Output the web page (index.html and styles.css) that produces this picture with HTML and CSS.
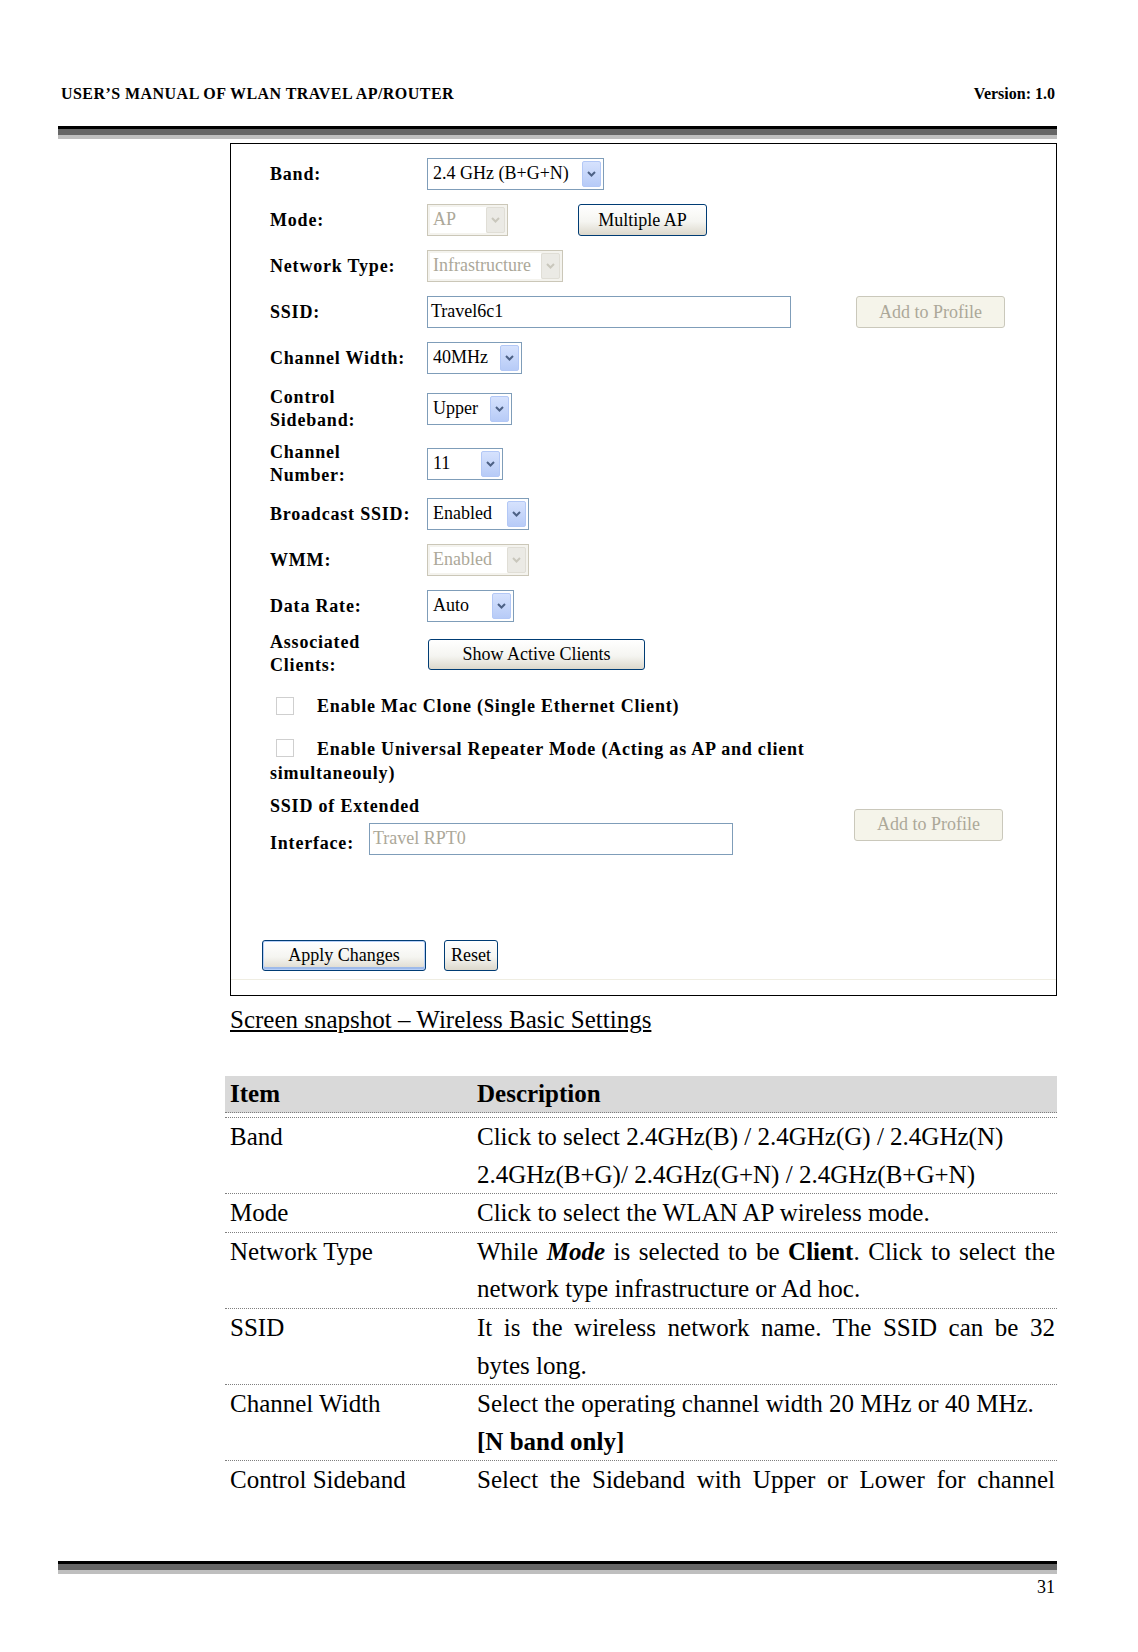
FILE: index.html
```
<!DOCTYPE html>
<html lang="en">
  <head>
    <meta charset="utf-8">
    <title>User's Manual - Wireless Basic Settings</title>
    <link rel="stylesheet" href="styles.css">
  </head>
  <body>
    <div class="sheet">
      <header class="runhead">
        <span class="doc-title">USER’S MANUAL OF WLAN TRAVEL AP/ROUTER</span>
        <span>Version: 1.0</span>
      </header>
      <div class="rule"></div>

      <div class="shot">
        <div class="form">
          <div class="row">
            <div class="lbl">Band:</div>
            <div class="sel sel-band"><span class="val">2.4 GHz (B+G+N)</span><span class="arr"><svg viewBox="0 0 9 6" width="9" height="6"><path d="M1 1 L4.5 4.5 L8 1" /></svg></span></div>
          </div>
          <div class="row">
            <div class="lbl">Mode:</div>
            <div class="sel sel-mode off"><span class="val">AP</span><span class="arr"><svg viewBox="0 0 9 6" width="9" height="6"><path d="M1 1 L4.5 4.5 L8 1" /></svg></span></div>
            <button class="btn btn-multi">Multiple AP</button>
          </div>
          <div class="row">
            <div class="lbl">Network Type:</div>
            <div class="sel sel-type off"><span class="val">Infrastructure</span><span class="arr"><svg viewBox="0 0 9 6" width="9" height="6"><path d="M1 1 L4.5 4.5 L8 1" /></svg></span></div>
          </div>
          <div class="row">
            <div class="lbl">SSID:</div>
            <div class="field field-ssid">Travel6c1</div>
            <button class="btn btn-add" disabled>Add to Profile</button>
          </div>
          <div class="row">
            <div class="lbl">Channel Width:</div>
            <div class="sel sel-width"><span class="val">40MHz</span><span class="arr"><svg viewBox="0 0 9 6" width="9" height="6"><path d="M1 1 L4.5 4.5 L8 1" /></svg></span></div>
          </div>
          <div class="row two">
            <div class="lbl">Control<br>Sideband:</div>
            <div class="sel sel-side"><span class="val">Upper</span><span class="arr"><svg viewBox="0 0 9 6" width="9" height="6"><path d="M1 1 L4.5 4.5 L8 1" /></svg></span></div>
          </div>
          <div class="row two">
            <div class="lbl">Channel<br>Number:</div>
            <div class="sel sel-chan"><span class="val">11</span><span class="arr"><svg viewBox="0 0 9 6" width="9" height="6"><path d="M1 1 L4.5 4.5 L8 1" /></svg></span></div>
          </div>
          <div class="row">
            <div class="lbl">Broadcast SSID:</div>
            <div class="sel sel-bcast"><span class="val">Enabled</span><span class="arr"><svg viewBox="0 0 9 6" width="9" height="6"><path d="M1 1 L4.5 4.5 L8 1" /></svg></span></div>
          </div>
          <div class="row">
            <div class="lbl">WMM:</div>
            <div class="sel sel-bcast off"><span class="val">Enabled</span><span class="arr"><svg viewBox="0 0 9 6" width="9" height="6"><path d="M1 1 L4.5 4.5 L8 1" /></svg></span></div>
          </div>
          <div class="row">
            <div class="lbl">Data Rate:</div>
            <div class="sel sel-rate"><span class="val">Auto</span><span class="arr"><svg viewBox="0 0 9 6" width="9" height="6"><path d="M1 1 L4.5 4.5 L8 1" /></svg></span></div>
          </div>
          <div class="row clients">
            <div class="lbl">Associated<br>Clients:</div>
            <button class="btn btn-clients">Show Active Clients</button>
          </div>

          <div class="check">
            <span class="box"></span><span class="txt">Enable Mac Clone (Single Ethernet Client)</span>
          </div>
          <p class="repeater">
            <span class="box"></span><span class="txt">Enable Universal Repeater Mode (Acting as AP and client simultaneouly)</span>
          </p>

          <div class="ext">
            <div class="ext-left">
              <div class="ext-title">SSID of Extended</div>
              <div class="ext-row">
                <div class="lbl-short">Interface:</div>
                <div class="field field-ext">Travel RPT0</div>
              </div>
            </div>
            <button class="btn btn-add btn-add2" disabled>Add to Profile</button>
          </div>

          <div class="actions">
            <button class="btn btn-apply">Apply Changes</button>
            <button class="btn btn-reset">Reset</button>
          </div>
        </div>
      </div>

      <p class="caption">Screen snapshot – Wireless Basic Settings</p>

      <div class="items">
        <div class="items-head">
          <div class="c1">Item</div>
          <div class="c2">Description</div>
        </div>
        <div class="items-body">
          <div class="item">
            <div class="c1">Band</div>
            <div class="c2">Click to select 2.4GHz(B) / 2.4GHz(G) / 2.4GHz(N)<br>2.4GHz(B+G)/ 2.4GHz(G+N) / 2.4GHz(B+G+N)</div>
          </div>
          <div class="item">
            <div class="c1">Mode</div>
            <div class="c2">Click to select the WLAN AP wireless mode.</div>
          </div>
          <div class="item">
            <div class="c1">Network Type</div>
            <div class="c2">While <b class="em">Mode</b> is selected to be <b>Client</b>. Click to select the network type infrastructure or Ad hoc.</div>
          </div>
          <div class="item">
            <div class="c1">SSID</div>
            <div class="c2">It is the wireless network name. The SSID can be 32 bytes long.</div>
          </div>
          <div class="item">
            <div class="c1">Channel Width</div>
            <div class="c2">Select the operating channel width 20 MHz or 40 MHz.<br><b>[N band only]</b></div>
          </div>
          <div class="item last">
            <div class="c1">Control Sideband</div>
            <div class="c2 spread">Select the Sideband with Upper or Lower for channel</div>
          </div>
        </div>
      </div>

      <footer class="foot">
        <div class="rule"></div>
        <div class="pageno">31</div>
      </footer>
    </div>
  </body>
</html>
```

FILE: styles.css
```
* {
  margin: 0;
  padding: 0;
  box-sizing: border-box;
}

body {
  font-family: "Liberation Serif", "Times New Roman", serif;
  color: #000;
  background: #fff;
}

.sheet {
  width: 1138px;
  height: 1652px;
  display: flex;
  flex-direction: column;
}

.runhead {
  display: flex;
  justify-content: space-between;
  margin: 85px 83px 0 61px;
  font-size: 16px;
  font-weight: bold;
  line-height: 18px;
}
.doc-title {
  letter-spacing: 0.45px;
}

.rule {
  margin: 23px 81px 0 58px;
  height: 13px;
  border-top: 3px solid #000;
  border-bottom: 4px solid #bfbfbf;
  background: #666;
}

/* screenshot of the router page */
.shot {
  margin: 4px 81px 0 230px;
  border: 1px solid #000;
}

.form {
  padding: 7px 0 0 39px;
  font-size: 18px;
}

.row {
  display: flex;
  align-items: center;
  height: 46px;
}
.row.two {
  height: 55px;
}
.row.clients {
  height: 50px;
}

.lbl {
  width: 157px;
  font-size: 18px;
  font-weight: bold;
  letter-spacing: 0.8px;
  line-height: 23px;
}

.sel {
  display: flex;
  height: 32px;
  padding: 2px;
  border: 1px solid #7f9db9;
  background: #fff;
}
.sel .val {
  flex: 1;
  padding-left: 3px;
  line-height: 25px;
  white-space: nowrap;
  overflow: hidden;
}
.sel .arr {
  width: 19px;
  display: flex;
  align-items: center;
  justify-content: center;
  border: 1px solid #b3c8f6;
  border-radius: 2px;
  background: linear-gradient(#d6e2fd, #b7cbf7);
}
.sel .arr path {
  fill: none;
  stroke: #4d6185;
  stroke-width: 2;
}
.sel.off {
  border-color: #cbc7b8;
  background: #f4f3ee;
}
.sel.off .val {
  background: #fff;
  color: #aca899;
}
.sel.off .arr {
  border-color: #e0ded6;
  background: #ebeae5;
}
.sel.off .arr path {
  stroke: #c9c7bc;
}

.sel-band { width: 177px; }
.sel-mode { width: 81px; }
.sel-type { width: 136px; }
.sel-width { width: 95px; }
.sel-side { width: 85px; }
.sel-chan { width: 76px; }
.sel-bcast { width: 102px; }
.sel-rate { width: 87px; }

.field {
  height: 32px;
  border: 1px solid #7f9db9;
  background: #fff;
  padding-left: 3px;
  line-height: 28px;
}
.field-ssid { width: 364px; }
.field-ext {
  width: 364px;
  color: #aca899;
}

.btn {
  font-family: "Liberation Serif", "Times New Roman", serif;
  font-size: 18px;
  height: 31px;
  border: 1px solid #003c74;
  border-radius: 3px;
  color: #000;
  background: linear-gradient(#fff, #f5f5f1 55%, #dcd8cc);
}
.btn:disabled {
  border-color: #cac8bb;
  background: #f5f4ea;
  color: #aca899;
}

.btn-multi {
  width: 129px;
  height: 32px;
  margin-left: 70px;
}
.btn-add {
  width: 149px;
  height: 32px;
  margin-left: 65px;
}
.btn-clients {
  width: 217px;
  margin-left: 1px;
}

.box {
  display: inline-block;
  width: 18px;
  height: 18px;
  border: 1px solid #cfcfcf;
  background: #fff;
  margin: 0 23px 0 6px;
  vertical-align: -2px;
}

.check,
.repeater,
.ext-title,
.lbl-short {
  font-size: 18px;
  font-weight: bold;
  letter-spacing: 0.8px;
}

.check {
  height: 52px;
  padding-top: 2px;
  display: flex;
  align-items: center;
}

.repeater {
  width: 580px;
  margin-top: 6px;
  line-height: 24px;
}

.ext {
  display: flex;
  align-items: center;
  margin-top: 9px;
}
.ext-left {
  width: 463px;
}
.ext-title {
  line-height: 24px;
}
.ext-row {
  display: flex;
  align-items: flex-end;
  margin-top: 5px;
}
.lbl-short {
  width: 99px;
  line-height: 24px;
}
.btn-add2 {
  margin-left: 121px;
}

.actions {
  display: flex;
  gap: 18px;
  margin: 85px 0 0 -8px;
  padding-bottom: 8px;
}
.btn-apply {
  width: 164px;
  box-shadow: inset 0 0 0 1px #b7cff7, inset 0 -2px 0 1px #9ebaea;
}
.btn-reset {
  width: 54px;
}

.form::after {
  content: "";
  display: block;
  margin-left: -39px;
  height: 15px;
  border-top: 1px solid #efede2;
}

/* caption and table */
.caption {
  margin: 9px 0 0 230px;
  font-size: 25px;
  line-height: 30px;
  text-decoration: underline;
}

.items {
  margin: 41px 81px 0 225px;
  font-size: 25px;
}

.items-head,
.item {
  display: grid;
  grid-template-columns: 247px 1fr;
}

.items-head {
  height: 37px;
  line-height: 36px;
  font-weight: bold;
  background: #d9d9d9;
  border-bottom: 1px dotted #7f7f7f;
}

.items-body {
  margin-top: 4px;
  border-top: 1px dotted #7f7f7f;
}

.item {
  line-height: 37.6px;
  border-bottom: 1px dotted #7f7f7f;
}
.item.last {
  border-bottom: none;
}

.c1 {
  padding-left: 5px;
}
.c2 {
  padding: 0 2px 0 5px;
  text-align: justify;
}
.c2.spread {
  text-align-last: justify;
}
.em {
  font-style: italic;
}

.foot {
  margin-top: auto;
  padding-bottom: 56px;
}
.foot .rule {
  margin-top: 0;
}
.pageno {
  margin: 4px 83px 0 0;
  text-align: right;
  font-size: 18px;
  line-height: 18px;
}
```
